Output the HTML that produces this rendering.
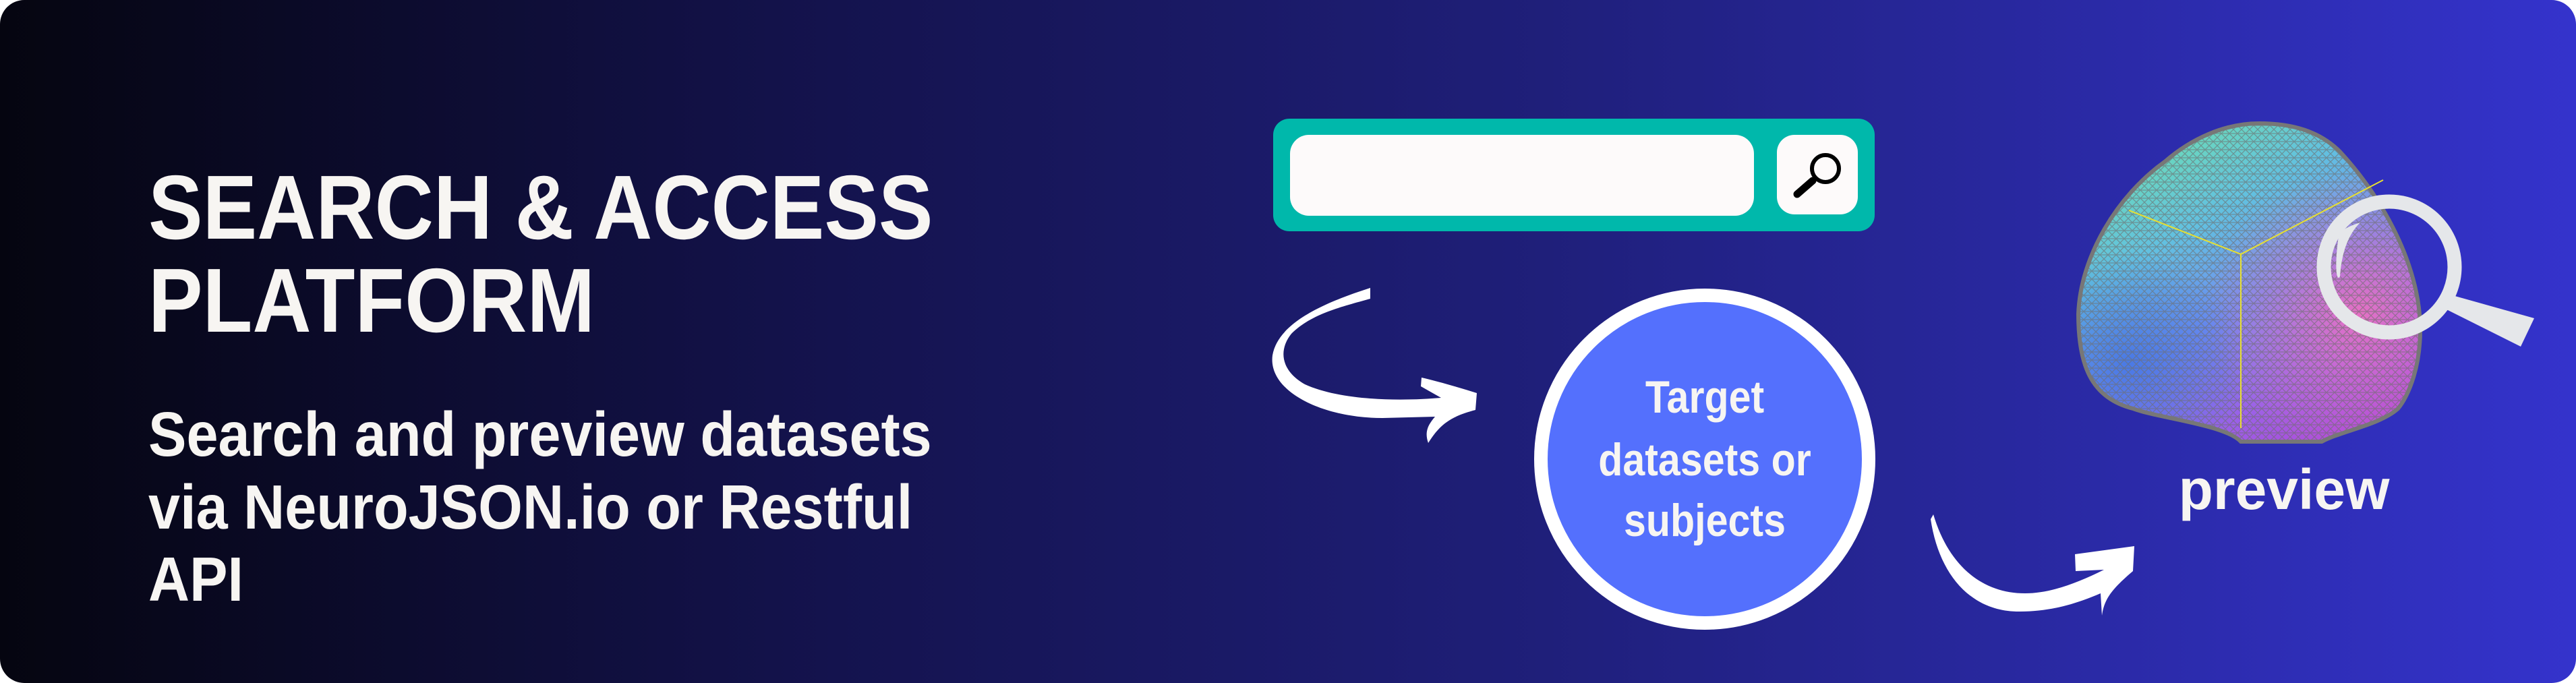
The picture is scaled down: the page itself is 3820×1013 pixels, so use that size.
<!DOCTYPE html>
<html><head><meta charset="utf-8"><style>
html,body{margin:0;padding:0;background:#fff;width:3820px;height:1013px;overflow:hidden}
svg{display:block}
text{font-family:"Liberation Sans",sans-serif;font-weight:bold;fill:#f7f5f2}
</style></head><body>
<svg width="3820" height="1013" viewBox="0 0 3820 1013" xmlns="http://www.w3.org/2000/svg">
<defs>
<linearGradient id="bg" x1="0" y1="0" x2="1" y2="0">
<stop offset="0" stop-color="#050510"/>
<stop offset="0.3" stop-color="#13124a"/>
<stop offset="0.6" stop-color="#1f1f7a"/>
<stop offset="1" stop-color="#3433cc"/>
</linearGradient>
<linearGradient id="brainV" x1="0.2" y1="0" x2="0.8" y2="1">
<stop offset="0" stop-color="#6de0b0"/>
<stop offset="0.3" stop-color="#62c0e0"/>
<stop offset="0.55" stop-color="#6f8cf0"/>
<stop offset="0.8" stop-color="#9a60e8"/>
<stop offset="1" stop-color="#b048d8"/>
</linearGradient>
<radialGradient id="brainR" cx="0.82" cy="0.6" r="0.45">
<stop offset="0" stop-color="#f070c0" stop-opacity="0.9"/>
<stop offset="1" stop-color="#e070c8" stop-opacity="0"/>
</radialGradient>
<radialGradient id="brainL" cx="0.15" cy="0.75" r="0.35">
<stop offset="0" stop-color="#3a70e0" stop-opacity="0.7"/>
<stop offset="1" stop-color="#3a70e0" stop-opacity="0"/>
</radialGradient>
<pattern id="mesh" width="12" height="12" patternUnits="userSpaceOnUse">
<path d="M0 0L12 12M12 0L0 12M0 6H12" stroke="#6e6e6e" stroke-width="1.3" opacity="0.6"/>
</pattern>
<path id="bs" d="M3350 183 C3400 183 3440 195 3470 225 C3530 290 3580 380 3588 466 C3594 540 3570 590 3556 606 C3530 630 3470 640 3443 655 L3323 655 C3300 630 3200 620 3163 606 C3100 590 3082 540 3082 466 C3085 380 3140 290 3210 240 C3250 205 3300 183 3350 183Z"/>
</defs>
<rect x="0" y="0" width="3820" height="1013" rx="36" fill="url(#bg)"/>

<g transform="translate(220,354) scale(0.895,1)"><text x="0" y="0" font-size="135">SEARCH &amp; ACCESS</text></g>
<g transform="translate(220,492) scale(0.895,1)"><text x="0" y="0" font-size="135">PLATFORM</text></g>
<g transform="translate(220,676) scale(0.91,1)"><text font-size="93">Search and preview datasets</text></g>
<g transform="translate(220,784) scale(0.91,1)"><text font-size="93">via NeuroJSON.io or Restful</text></g>
<g transform="translate(220,891) scale(0.91,1)"><text font-size="93">API</text></g>

<rect x="1888" y="176" width="892" height="167" rx="24" fill="#00b8ab"/>
<rect x="1913" y="200" width="688" height="120" rx="28" fill="#fdfafa"/>
<rect x="2635" y="200" width="120" height="118" rx="26" fill="#fdfafa"/>
<circle cx="2707" cy="250" r="20" fill="none" stroke="#000" stroke-width="6"/>
<line x1="2688" y1="268" x2="2665" y2="288" stroke="#000" stroke-width="11" stroke-linecap="round"/>

<path d="M2032 427 C1960 450 1895 480 1887 527 C1880 580 1960 620 2050 620 L2128 618 C2118 630 2112 640 2118 657 C2135 630 2150 618 2188 608 L2190 583 C2165 575 2130 565 2108 560 L2107 573 L2137 590 C2080 595 1990 595 1935 570 C1900 550 1895 520 1915 495 C1945 465 1990 455 2032 443 Z" fill="#fff"/>

<circle cx="2528" cy="681" r="243" fill="#5470fd" stroke="#fff" stroke-width="20"/>
<g transform="translate(2528,612) scale(0.87,1)"><text font-size="68" text-anchor="middle">Target</text></g>
<g transform="translate(2528,705) scale(0.87,1)"><text font-size="68" text-anchor="middle">datasets or</text></g>
<g transform="translate(2528,795) scale(0.87,1)"><text font-size="68" text-anchor="middle">subjects</text></g>

<path d="M2863 770 C2875 850 2920 905 2990 907 C3040 908 3080 895 3115 880 L3117 913 C3120 890 3130 875 3163 847 L3165 810 L3077 822 L3078 847 L3120 845 C3080 865 3040 880 3003 880 C2940 880 2890 840 2867 763 Z" fill="#fff"/>

<use href="#bs" fill="url(#brainV)"/>
<use href="#bs" fill="url(#brainR)"/>
<use href="#bs" fill="url(#brainL)"/>
<use href="#bs" fill="url(#mesh)" stroke="#777" stroke-width="6"/>
<path d="M3157 312 L3323 377 L3534 267 M3323 377 V635" stroke="#e8e030" stroke-width="2" fill="none"/>

<ellipse cx="3543" cy="396" rx="97" ry="97" fill="none" stroke="#e5e7ea" stroke-width="21"/>
<path d="M3626 435 L3758 472 L3738 514 L3620 455Z" fill="#e5e7ea"/>
<path d="M3468 350 C3462 390 3464 420 3470 410 C3472 380 3480 350 3500 330 C3485 335 3472 340 3468 350Z" fill="#e5e7ea"/>

<text x="3387" y="755" font-size="84" text-anchor="middle">preview</text>
</svg>
</body></html>
